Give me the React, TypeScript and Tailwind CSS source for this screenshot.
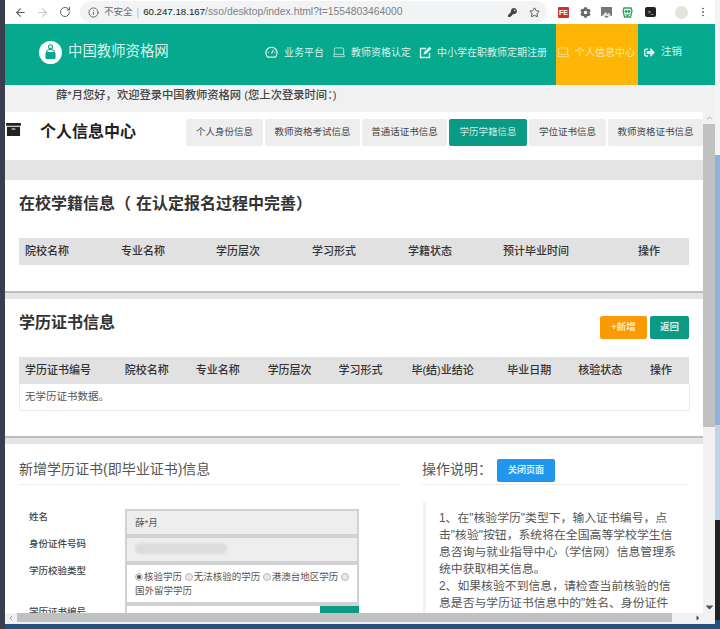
import { ArrowLeft, ArrowRight, RotateCw, Info, Star, MoreVertical, Laptop, ChevronUp, ChevronLeft } from 'lucide-react'
import { FaArchive, FaSignOutAlt, FaKey, FaCog, FaCaretDown, FaCaretRight } from 'react-icons/fa'
import type { ReactNode } from 'react'

const font = { fontFamily: '"Liberation Sans", "Noto Sans CJK SC", sans-serif' }

function GaugeIcon() {
  return (
    <svg width="13" height="13" viewBox="0 0 13 13" fill="none" stroke="currentColor" strokeWidth="1.2" className="mr-[6px] shrink-0">
      <path d="M3 11.200a5.600 5.600 0 1 1 7 0z" />
      <path d="M6.500 7.500 8.500 4" />
      <path d="M2.800 6.500h1M9.300 6.500h1" />
    </svg>
  )
}

function EditIcon() {
  return (
    <svg width="13" height="13" viewBox="0 0 13 13" fill="none" className="mr-[5px] shrink-0">
      <path d="M10.500 7v4.500h-9v-9H7" stroke="currentColor" strokeWidth="1.400" />
      <path d="M4.500 8.500l.5-2.500L10.500.700l2 2L7 8z" fill="currentColor" />
    </svg>
  )
}

const navItems = [
  { label: '业务平台', icon: <GaugeIcon />, w: 'w-[67px]' },
  { label: '教师资格认定', icon: <Laptop size={14} strokeWidth={1.3} className="mr-[5px] shrink-0" />, w: 'w-[87px]' },
  { label: '中小学在职教师定期注册', icon: <EditIcon />, w: 'w-[137px]' },
]

const tabs = [
  { label: '个人身份信息', w: 'w-[77px]' },
  { label: '教师资格考试信息', w: 'w-[95px]' },
  { label: '普通话证书信息', w: 'w-[85px]' },
  { label: '学历学籍信息', w: 'w-[78px]', active: true },
  { label: '学位证书信息', w: 'w-[77px]' },
  { label: '教师资格证书信息', w: 'w-[95px]' },
]

const col1 = [
  { label: '院校名称', w: 'w-[96px]' },
  { label: '专业名称', w: 'w-[95px]' },
  { label: '学历层次', w: 'w-[96px]' },
  { label: '学习形式', w: 'w-[96px]' },
  { label: '学籍状态', w: 'w-[95px]' },
  { label: '预计毕业时间', w: 'w-[135px]' },
  { label: '操作', w: 'w-[57px]' },
]

const col2 = [
  { label: '学历证书编号', w: 'w-[100px]' },
  { label: '院校名称', w: 'w-[71px]' },
  { label: '专业名称', w: 'w-[72px]' },
  { label: '学历层次', w: 'w-[71px]' },
  { label: '学习形式', w: 'w-[73px]' },
  { label: '毕(结)业结论', w: 'w-[96px]' },
  { label: '毕业日期', w: 'w-[71px]' },
  { label: '核验状态', w: 'w-[72px]' },
  { label: '操作', w: 'w-[45px]' },
]

function BrowserBar() {
  return (
    <div className="h-[24px] bg-white flex items-center text-[#5f6368] shrink-0">
      <ArrowLeft size={13} className="ml-[9px]" />
      <ArrowRight size={13} className="ml-[9px] text-[#c4c6c9]" />
      <RotateCw size={12} className="ml-[10px]" />
      <div className="ml-[9px] w-[467px] h-[22px] rounded-full bg-[#f1f3f4] flex items-center pl-[8px] text-[10px] whitespace-nowrap">
        <Info size={11} />
        <span className="ml-[5px] text-[9.500px] text-[#6a6d70]">不安全</span>
        <span className="mx-[4px] text-[#bbb]">|</span>
        <span className="text-[9.700px] text-[#202124]">60.247.18.167</span>
        <span className="text-[10.350px] text-[#7f8285]">/sso/desktop/index.html?t=1554803464000</span>
        <FaKey size={9} className="ml-auto text-[#444]" />
        <Star size={11} className="ml-[12px] mr-[7px] text-[#444]" />
      </div>
      <div className="ml-[11px] w-[11px] h-[11px] rounded-[1px] bg-[#c9342f] text-white text-[7px] font-bold leading-[11px] text-center">FE</div>
      <FaCog size={11} className="ml-[11px] text-[#666]" />
      <svg width="11" height="11" viewBox="0 0 11 11" className="ml-[10px]">
        <rect x="0" y="0" width="11" height="9" fill="#777" />
        <path d="M1 9l3.500-4 2 2 1.500-1.500L10 9z" fill="#ddd" />
        <path d="M3 9h5l-2.500 2z" fill="#777" />
      </svg>
      <svg width="11" height="11" viewBox="0 0 11 11" className="ml-[10px]" fill="none" stroke="#2f9e5b" strokeWidth="1.300">
        <path d="M2 1h7l1 3-1.500 6h-6L1 4z" />
        <circle cx="4" cy="4.500" r=".8" fill="#2f9e5b" />
        <circle cx="7" cy="4.500" r=".8" fill="#2f9e5b" />
        <path d="M3.500 7.500 5.500 8.500 7.500 7" />
      </svg>
      <div className="ml-[12px] w-[11px] h-[10px] rounded-[2px] bg-[#222] flex items-center justify-center text-white text-[5px] leading-none">&gt;_</div>
      <div className="ml-[19px] w-[13px] h-[13px] rounded-full bg-[#e6e3d8]" />
      <MoreVertical size={12} className="ml-[9px]" />
    </div>
  )
}

function Header() {
  return (
    <div className="h-[61px] bg-[#06a88e] flex text-white shrink-0">
      <div className="flex items-center ml-[34px] w-[171px] pb-[5px]">
        <div className="w-[23px] h-[23px] rounded-full bg-white flex items-center justify-center shrink-0">
          <svg width="15" height="16" viewBox="0 0 15 16">
            <circle cx="7.500" cy="2.800" r="2" fill="none" stroke="#06a88e" strokeWidth="1.100" />
            <path d="M3.500 8.500c0-2 1.800-3 4-3s4 1 4 3z" fill="none" stroke="#06a88e" strokeWidth="1.100" />
            <rect x="2.500" y="8.500" width="10" height="6.500" rx="1" fill="#06a88e" />
          </svg>
        </div>
        <span className="ml-[6px] text-[14.400px] text-[#d9f3ee] whitespace-nowrap">中国教师资格网</span>
      </div>
      <div className="flex items-center ml-[55px] pb-[5px]">
        {navItems.map((item) => (
          <div key={item.label} className={`flex items-center text-[10px] text-[#d9f3ee] ${item.w}`}>
            {item.icon}
            <span className="whitespace-nowrap">{item.label}</span>
          </div>
        ))}
      </div>
      <div className="w-[82px] bg-[#fdb507] flex items-center pb-[5px] text-[10px] text-[#fde9a9]">
        <Laptop size={14} strokeWidth={1.3} className="mr-[5px] shrink-0" />
        <span className="whitespace-nowrap">个人信息中心</span>
      </div>
      <div className="flex items-center ml-[6px] pb-[5px] text-[10px] text-[#d9f3ee]">
        <FaSignOutAlt size={11} className="mr-[6px]" />
        <span className="text-[10.500px]">注销</span>
      </div>
    </div>
  )
}

function HeadRow({ cols }: { cols: { label: string; w: string }[] }) {
  return (
    <div className="flex h-[27px] items-center bg-[#e2e1e2] text-[11px] font-medium text-[#333]">
      {cols.map((c) => (
        <div key={c.label} className={`${c.w} pl-[6px] whitespace-nowrap`}>
          {c.label}
        </div>
      ))}
    </div>
  )
}

function Field({ label, children, tall }: { label: string; children: ReactNode; tall?: boolean }) {
  return (
    <div className="flex">
      <div className="w-[120px] pl-[24px] pt-[1px] text-[9.500px] font-medium text-[#444] whitespace-nowrap">{label}</div>
      <div className={`w-[234px] border-2 border-[#d2d2d2] ${tall ? 'bg-white h-[41px]' : 'bg-[#eeeeee] h-[27px]'} px-[8px] text-[9.500px] text-[#555]`}>
        {children}
      </div>
    </div>
  )
}

function Radio({ on }: { on?: boolean }) {
  return (
    <span className="inline-block align-[-1px] w-[8px] h-[8px] rounded-full border border-[#bbb] bg-[#e8e8e8] mr-[1px] relative">
      {on && <span className="absolute left-[1px] top-[1px] w-[4px] h-[4px] rounded-full bg-[#555]" />}
    </span>
  )
}

function Content() {
  return (
    <div className="w-[698px] h-[528px] overflow-hidden bg-[#f1f1f1]">
      <div className="h-[27px] pl-[51px] pt-[2px] text-[11.300px] font-medium text-[#444] whitespace-nowrap">薛*月您好，欢迎登录中国教师资格网 (您上次登录时间：)</div>

      <div className="h-[48px] bg-white flex items-start">
        <FaArchive size={15} className="ml-[1px] mt-[10px] text-[#222] shrink-0" />
        <div className="ml-[19px] mt-[9px] text-[16px] leading-[22px] font-bold text-[#222] w-[146px] whitespace-nowrap">个人信息中心</div>
        <div className="flex gap-[2px] mt-[7px]">
          {tabs.map((t) => (
            <div
              key={t.label}
              className={`${t.w} h-[27px] rounded-[2px] flex items-center justify-center text-[9.500px] whitespace-nowrap ${
                t.active ? 'bg-[#0b9a86] text-[#c9ece6]' : 'bg-[#eeeeee] text-[#444]'
              }`}
            >
              {t.label}
            </div>
          ))}
        </div>
      </div>

      <div className="h-[20px] bg-[#e4e4e4]" />

      <div className="h-[113px] bg-white px-[14px] border-b-2 border-[#bdbdbd]">
        <div className="pt-[12px] h-[58px] text-[16px] font-bold text-[#333] whitespace-nowrap">
          在校学籍信息（<span className="ml-[5px]">在认定报名过程中完善</span>）
        </div>
        <HeadRow cols={col1} />
      </div>

      <div className="h-[6px] bg-[#e4e4e4]" />

      <div className="h-[139px] bg-white px-[14px] border-b-2 border-[#bdbdbd]">
        <div className="flex h-[58px] items-start">
          <div className="pt-[12px] text-[16px] font-bold text-[#333]">学历证书信息</div>
          <div className="ml-auto mt-[17px] flex gap-[3px]">
            <div className="w-[47px] h-[23px] rounded-[2px] bg-[#fb9a06] text-[#ffe9c8] text-[9.500px] font-bold flex items-center justify-center">+新增</div>
            <div className="w-[39px] h-[23px] rounded-[2px] bg-[#0b9a86] text-[#d4f0ea] text-[9.500px] font-bold flex items-center justify-center">返回</div>
          </div>
        </div>
        <HeadRow cols={col2} />
        <div className="h-[27px] w-[671px] border border-t-0 border-[#eaeaea] pl-[5px] flex items-center text-[10.500px] text-[#555]">无学历证书数据。</div>
      </div>

      <div className="h-[6px] bg-[#e4e4e4]" />

      <div className="bg-white flex h-[169px]">
        <div className="w-[417px] pl-[14px]">
          <div className="h-[41px] pt-[16px] w-[381px] border-b border-[#eeeeee] text-[14px] leading-[18px] text-[#555] whitespace-nowrap">新增学历证书(即毕业证书)信息</div>
          <div className="mt-[24px] flex flex-col -ml-[14px]">
            <Field label="姓名">
              <span className="leading-[23px]">薛*月</span>
            </Field>
            <Field label="身份证件号码">
              <div className="mt-[5px] w-[92px] h-[11px] rounded-full bg-[#dcdcdc] blur-[1px]" />
            </Field>
            <Field label="学历校验类型" tall>
              <div className="leading-[14px] pt-[5px] whitespace-nowrap">
                <Radio on />核验学历 <Radio />无法核验的学历 <Radio />港澳台地区学历 <Radio />
                <br />
                国外留学学历
              </div>
            </Field>
            <div className="flex">
              <div className="w-[120px] pl-[24px] pt-[1px] text-[9.500px] font-medium text-[#444] whitespace-nowrap">学历证书编号</div>
              <div className="w-[234px] h-[20px] border-2 border-r-0 border-[#d2d2d2] bg-white flex justify-end">
                <div className="w-[39px] bg-[#0b9a86]" />
              </div>
            </div>
          </div>
        </div>
        <div className="w-[268px]">
          <div className="h-[41px] w-[267px] border-b border-[#eeeeee] flex items-start">
            <div className="pt-[16px] text-[14px] leading-[18px] text-[#555] whitespace-nowrap">操作说明：</div>
            <div className="ml-[5px] mt-[15px] w-[58px] h-[23px] rounded-[2px] bg-[#2196ee] text-[#d9eefd] text-[9px] font-bold flex items-center justify-center">关闭页面</div>
          </div>
          <div className="mt-[17px] ml-[1px] h-[140px] border-l-[3px] border-[#f2f2f2] pl-[13px] text-[11.850px] leading-[17px] text-[#555] pt-[8px] w-[259px]">
            1、在"核验学历"类型下，输入证书编号，点击"核验"按钮，系统将在全国高等学校学生信息咨询与就业指导中心（学信网）信息管理系统中获取相关信息。
            <br />
            2、如果核验不到信息，请检查当前核验的信息是否与学历证书信息中的"姓名、身份证件
          </div>
        </div>
      </div>
    </div>
  )
}

export default function App() {
  return (
    <div className="w-[720px] h-[629px] overflow-hidden flex bg-[#1f3a5c]" style={font}>
      <div className="w-[5px] bg-[#3a3d4e]" />
      <div className="w-[710px] flex flex-col">
        <BrowserBar />
        <Header />
        <div className="flex">
          <Content />
          <div className="flex-1 flex flex-col">
            <div className="h-[27px] bg-[#f1f1f1]" />
            <div className="flex-1 flex flex-col bg-[#f1f1f1] items-center">
              <ChevronUp size={9} className="h-[12px] text-[#999]" />
              <div className="w-full h-[303px] bg-[#c1c1c1]" />
              <div className="flex-1" />
              <FaCaretDown size={9} className="h-[12px] text-[#555]" />
            </div>
          </div>
        </div>
        <div className="h-[9px] bg-[#f1f1f1] flex items-center">
          <ChevronLeft size={8} className="ml-[2px] text-[#777]" />
          <div className="ml-[2px] w-[655px] h-full bg-[#c1c1c1]" />
          <FaCaretRight size={8} className="ml-[22px] text-[#555]" />
        </div>
        <div className="h-[2px] bg-[#eef2f6]" />
        <div className="flex-1 bg-[#23527f]" />
      </div>
      <div className="w-[5px] flex flex-col">
        <div className="h-[155px] bg-[#f4f4f4]" />
        <div className="h-[270px] bg-[#8fb0d8]" />
        <div className="h-[95px] bg-[#c4d4e6]" />
        <div className="h-[100px] bg-[#222222]" />
        <div className="flex-1 bg-[#23527f]" />
      </div>
    </div>
  )
}
